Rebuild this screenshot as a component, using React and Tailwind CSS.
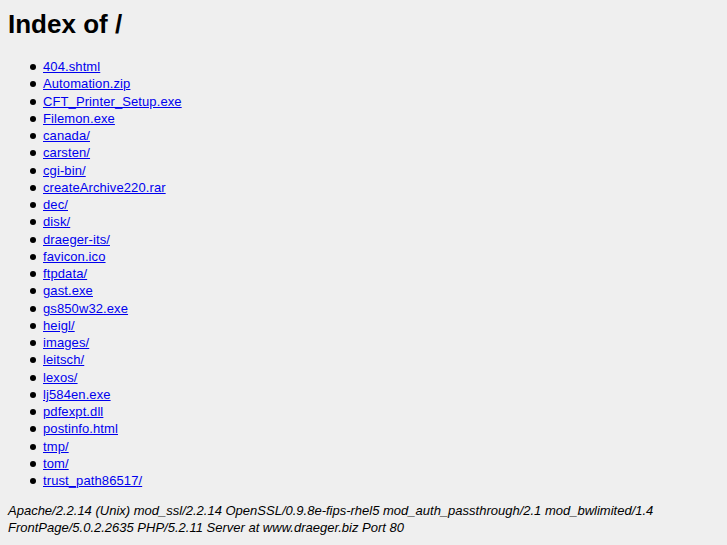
const files = [
  "404.shtml",
  "Automation.zip",
  "CFT_Printer_Setup.exe",
  "Filemon.exe",
  "canada/",
  "carsten/",
  "cgi-bin/",
  "createArchive220.rar",
  "dec/",
  "disk/",
  "draeger-its/",
  "favicon.ico",
  "ftpdata/",
  "gast.exe",
  "gs850w32.exe",
  "heigl/",
  "images/",
  "leitsch/",
  "lexos/",
  "lj584en.exe",
  "pdfexpt.dll",
  "postinfo.html",
  "tmp/",
  "tom/",
  "trust_path86517/",
];

export default function App() {
  return (
    <div className="min-h-[545px] bg-[#efefef] px-2 pt-[9px] text-[13px] text-black font-['Liberation_Sans',Arial,sans-serif]">
      <h1 className="text-[26px] font-bold leading-[30px]">Index of /</h1>
      <ul className="mt-[19px] pl-[35px] leading-[17.25px]">
        {files.map((f) => (
          <li key={f} className="relative h-[17.25px]">
            <span className="absolute left-[-13px] top-[6px] h-[6px] w-[6px] rounded-full bg-black" />
            <a href={f} className="text-[#0000ee] underline tracking-[0.1px]">
              {f}
            </a>
          </li>
        ))}
      </ul>
      <address className="mt-[13px] leading-[17px] italic">
        Apache/2.2.14 (Unix) mod_ssl/2.2.14 OpenSSL/0.9.8e-fips-rhel5 mod_auth_passthrough/2.1 mod_bwlimited/1.4 FrontPage/5.0.2.2635 PHP/5.2.11 Server at www.draeger.biz Port 80
      </address>
    </div>
  );
}
